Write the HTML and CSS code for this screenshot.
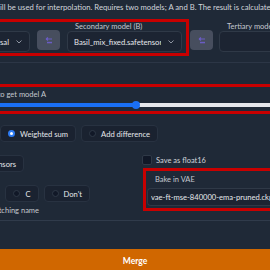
FILE: index.html
```html
<!DOCTYPE html>
<html lang="en">
<head>
    <meta charset="UTF-8">
    <meta name="viewport" content="width=device-width, initial-scale=1.0">
    <title>Checkpoint Merger</title>
    <link rel="stylesheet" href="styles.css">
</head>
<body>
<div class="merger">
    <p class="desc">ill be used for interpolation. Requires two models; A and B. The result is calculated as A*(1-M) + B*M</p>

    <div class="models">
        <div class="group hl hl-models">
            <div class="field field-a">
                <span class="label">Primary model (A)</span>
                <div class="select select-end">
                    <span class="value">v1-5-pruned-emaonly-universal</span>
                    <svg class="chevron" width="6" height="4" viewBox="0 0 6 4"><polyline points="0.5,0.5 3,3 5.5,0.5" fill="none" stroke="#9ca3af" stroke-width="0.9"/></svg>
                </div>
            </div>
            <button class="swap" title="Swap">
                <svg width="8" height="7" viewBox="0 0 8 7"><path d="M1 2 L3 0.5 M1 2 L3 3.5 M1 2 H7" fill="none" stroke="#6a5cc4" stroke-width="1.1"/><rect x="2" y="4.8" width="5" height="1.5" fill="#6a5cc4"/></svg>
            </button>
            <div class="field field-b">
                <span class="label">Secondary model (B)</span>
                <div class="select">
                    <span class="value">Basil_mix_fixed.safetensors</span>
                    <svg class="chevron" width="6" height="4" viewBox="0 0 6 4"><polyline points="0.5,0.5 3,3 5.5,0.5" fill="none" stroke="#9ca3af" stroke-width="0.9"/></svg>
                </div>
            </div>
        </div>
        <div class="group group-c">
            <button class="swap" title="Swap">
                <svg width="8" height="7" viewBox="0 0 8 7"><path d="M1 2 L3 0.5 M1 2 L3 3.5 M1 2 H7" fill="none" stroke="#6a5cc4" stroke-width="1.1"/><rect x="2" y="4.8" width="5" height="1.5" fill="#6a5cc4"/></svg>
            </button>
            <div class="field field-c">
                <span class="label">Tertiary model (C)</span>
                <div class="select"><span class="value"></span></div>
            </div>
        </div>
    </div>

    <div class="hl hl-alpha">
        <div class="alpha-label"><span>Multiplier (M) - set to 0 to get model A</span></div>
        <div class="slider">
            <div class="track"></div>
            <div class="thumb"></div>
        </div>
    </div>

    <div class="radios methods">
        <label class="radio radio-first"><span class="dot"></span>No interpolation</label>
        <label class="radio"><span class="dot checked"></span>Weighted sum</label>
        <label class="radio"><span class="dot"></span>Add difference</label>
    </div>

    <div class="lower">
        <div class="lower-left">
            <div class="radios row-end fmt">
                <label class="radio"><span class="dot"></span>ckpt</label>
                <label class="radio"><span class="dot"></span>safetensors</label>
            </div>
            <div class="radios row-end config">
                <label class="radio"><span class="dot"></span>A, B or C</label>
                <label class="radio"><span class="dot"></span>B</label>
                <label class="radio"><span class="dot"></span>C</label>
                <label class="radio"><span class="dot"></span>Don't</label>
            </div>
            <div class="row-end discard"><span>Discard weights with matching name</span></div>
        </div>
        <div class="lower-right">
            <label class="save"><span class="box"></span>Save as float16</label>
            <div class="hl hl-vae">
                <span class="vae-label">Bake in VAE</span>
                <div class="select select-vae"><span class="value">vae-ft-mse-840000-ema-pruned.ckpt</span></div>
            </div>
        </div>
    </div>

    <div class="rule"></div>

    <button class="merge">Merge</button>
    <div class="tail"></div>
</div>
</body>
</html>
```

FILE: styles.css
```css
* {
    box-sizing: border-box;
}
body {
    margin: 0;
    background-color: #1f2937;
    color: #e5e7eb;
    font-family: Lato, "Open Sans", sans-serif;
    overflow: hidden;
}
.merger {
    width: 270px;
    height: 270px;
    display: flex;
    flex-direction: column;
    overflow: hidden;
}
.desc {
    margin: 0;
    height: 15px;
    font-size: 7.7px;
    line-height: 15px;
    white-space: nowrap;
    color: #d1d5db;
}
.hl {
    border: 3px solid #c80000;
}
.models {
    display: flex;
    margin: 4px 0 0 -128px;
    padding-bottom: 6px;
    border-bottom: 1px solid #2c3646;
}
.group {
    display: flex;
    align-items: flex-end;
    gap: 7px;
    flex-shrink: 0;
}
.hl-models {
    padding: 0 4px 1px 5px;
}
.group-c {
    border: 3px solid transparent;
    margin-left: -2px;
    gap: 6px;
    padding-bottom: 1px;
}
.field {
    display: flex;
    flex-direction: column;
    flex-shrink: 0;
}
.field-a { width: 150px; }
.field-b { width: 115px; }
.field-c { width: 120px; }
.label {
    height: 9px;
    font-size: 7.5px;
    line-height: 9px;
    color: #c4c8cf;
    padding-left: 8px;
    white-space: nowrap;
}
.select {
    height: 21px;
    display: flex;
    align-items: center;
    gap: 7px;
    padding: 0 7px 0 6px;
    background: #1c2432;
    border: 1px solid #2f3947;
    border-radius: 4px;
    overflow: hidden;
    font-size: 7.7px;
    color: #e5e7eb;
}
.select .value {
    flex: 1;
    white-space: nowrap;
    overflow: hidden;
}
.select-end {
    justify-content: flex-end;
}
.select-end .value {
    flex: none;
    overflow: visible;
}
.chevron {
    flex-shrink: 0;
}
.swap {
    width: 23px;
    height: 20px;
    margin-bottom: 2px;
    padding: 0;
    border: none;
    border-radius: 4px;
    background: #474e5e;
    display: flex;
    align-items: center;
    justify-content: center;
    flex-shrink: 0;
}
.hl-alpha {
    margin: 21px -10px 0;
    padding: 0 7px;
}
.alpha-label {
    width: 46px;
    height: 13px;
    display: flex;
    justify-content: flex-end;
    align-items: flex-end;
    font-size: 7.5px;
    line-height: 11px;
    color: #c4c8cf;
    white-space: nowrap;
}
.slider {
    position: relative;
    padding: 3px 0 4px;
}
.track {
    height: 4px;
    background: linear-gradient(90deg, #1a6ff5 0 136px, #e6e7eb 136px);
}
.thumb {
    position: absolute;
    left: 132px;
    top: 1px;
    width: 8px;
    height: 8px;
    border-radius: 50%;
    background: #1a6ff5;
}
.radios {
    display: flex;
    gap: 5px;
}
.methods {
    margin: 11px 0 0 -85px;
}
.radio {
    height: 17px;
    display: flex;
    align-items: center;
    gap: 5px;
    padding: 0 7px;
    background: #1a2230;
    border: 1px solid #283241;
    border-radius: 4px;
    font-size: 7.6px;
    color: #e5e7eb;
    white-space: nowrap;
    flex-shrink: 0;
}
.radio-first {
    width: 80px;
}
.dot {
    width: 7px;
    height: 7px;
    border-radius: 50%;
    background: #111827;
    border: 1px solid #2f3947;
    flex-shrink: 0;
}
.dot.checked {
    background: #fff;
    border: 2px solid #2d7bf3;
}
.lower {
    display: flex;
    margin-top: 13px;
}
.lower-left {
    width: 142px;
    flex-shrink: 0;
}
.row-end {
    display: flex;
    justify-content: flex-end;
}
.fmt { width: 24px; }
.config {
    width: 90px;
    margin-top: 13px;
}
.discard {
    width: 39px;
    margin-top: 5px;
    height: 8px;
    font-size: 7.5px;
    line-height: 8px;
    color: #c4c8cf;
    white-space: nowrap;
}
.lower-right {
    flex: 1;
}
.save {
    height: 10px;
    display: flex;
    align-items: center;
    gap: 4px;
    font-size: 7.5px;
    color: #d1d5db;
    white-space: nowrap;
}
.box {
    width: 10px;
    height: 10px;
    border-radius: 2px;
    background: #111827;
    border: 1px solid #2f3947;
}
.hl-vae {
    margin: 3px -20px 0 1px;
    padding: 0 0 2px 1px;
}
.vae-label {
    display: block;
    height: 17px;
    padding-left: 8px;
    font-size: 7.5px;
    line-height: 17px;
    color: #c4c8cf;
}
.select-vae {
    height: 18px;
    padding-left: 3px;
    font-size: 7.6px;
    border-right: none;
    border-radius: 4px 0 0 4px;
}
.rule {
    margin-top: 5px;
    border-top: 1px solid #303b4b;
}
.merge {
    margin-top: 28px;
    height: 23px;
    border: none;
    background: #d06700;
    color: #fff;
    font-family: Lato, "Open Sans", sans-serif;
    font-weight: bold;
    font-size: 8.5px;
    flex-shrink: 0;
}
.tail {
    flex: 1;
    background: #0f1520;
}
```
